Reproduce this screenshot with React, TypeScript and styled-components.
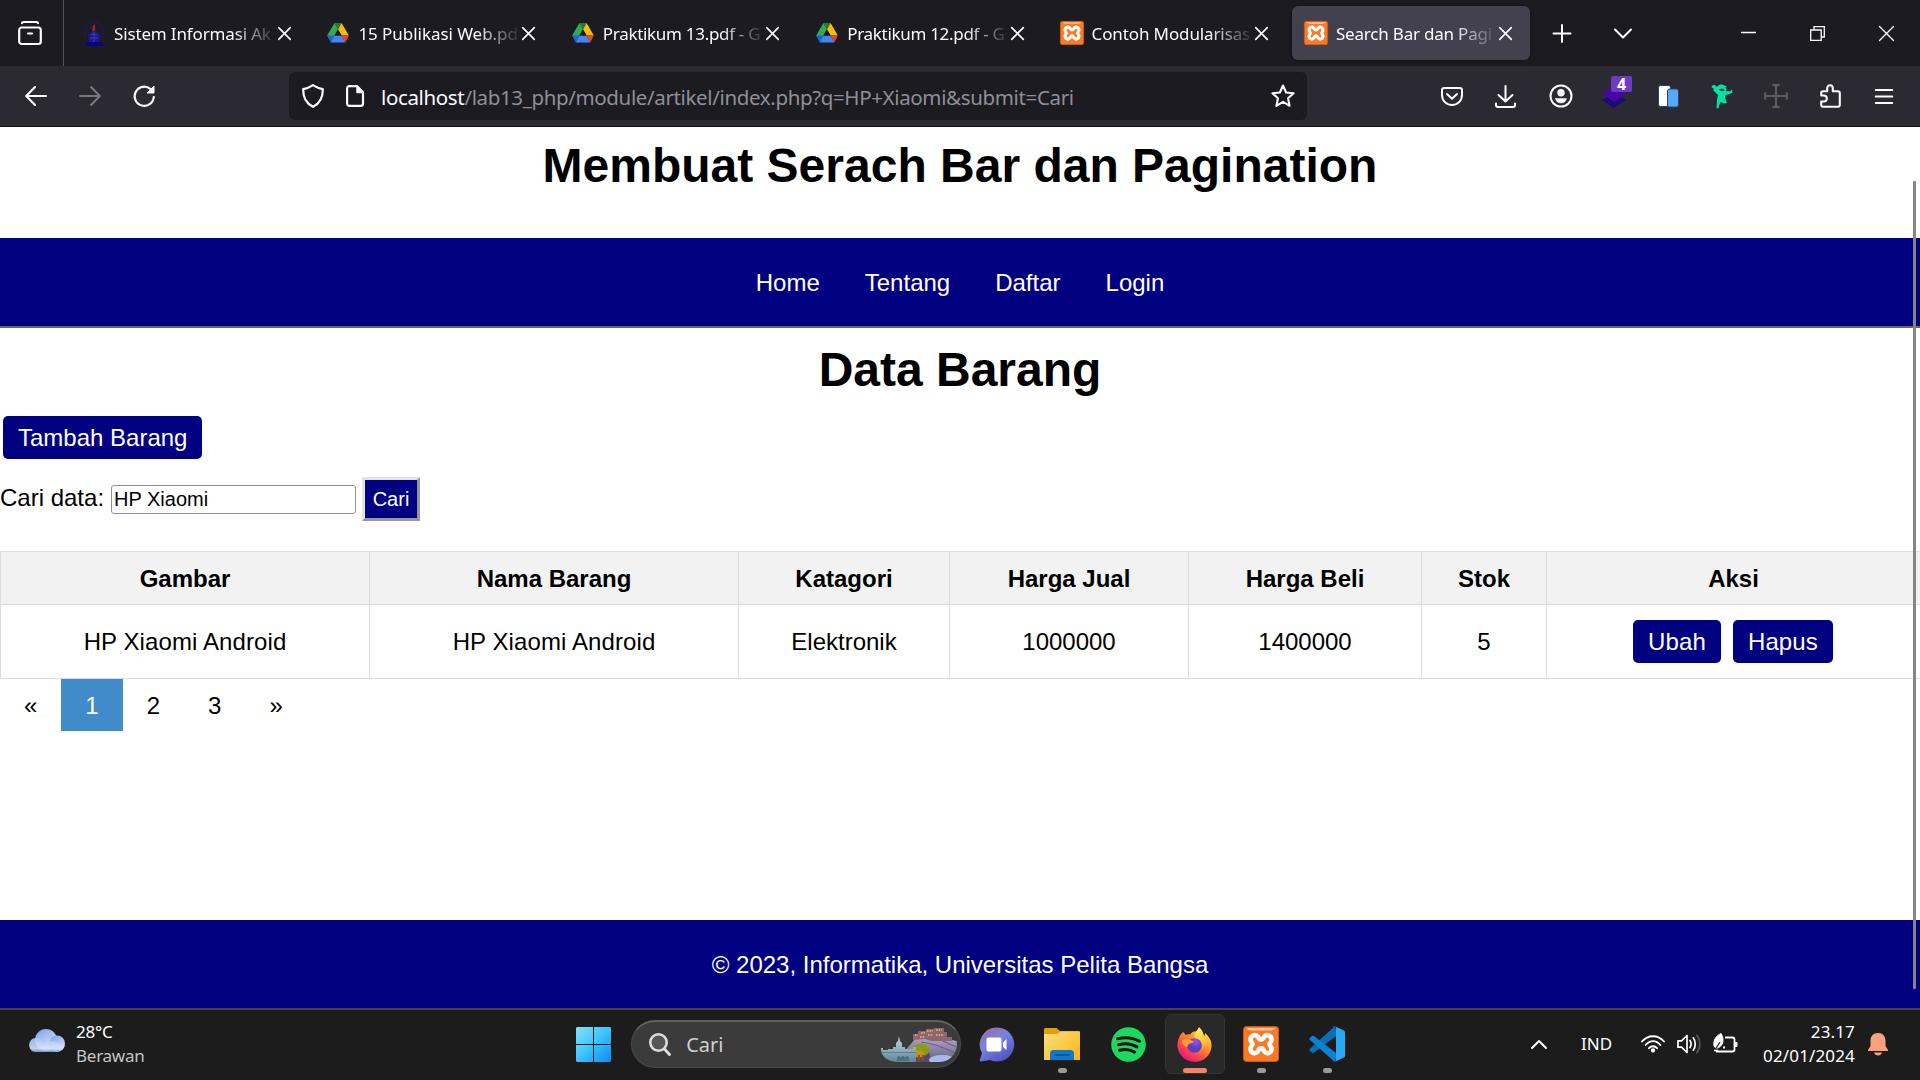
import React from "react";
import styled, { createGlobalStyle } from "styled-components";

const NAVY = "#000080";
const UI_FONT = `"Noto Sans", "Open Sans", sans-serif`;
const PAGE_FONT = `"Liberation Sans", Arial, sans-serif`;

const GlobalStyle = createGlobalStyle`
  *, *::before, *::after { box-sizing: border-box; }
  html, body { margin: 0; padding: 0; background: #fff; overflow: hidden; }
  svg { display: block; flex: none; overflow: visible; }
`;

const Screen = styled.div`
  width: 1920px;
  height: 1080px;
  display: flex;
  flex-direction: column;
  overflow: hidden;
`;

/* ---------- browser chrome ---------- */

const TabStrip = styled.div`
  height: 66px;
  flex: none;
  display: flex;
  align-items: center;
  background: #1c1b22;
  color: #fbfbfe;
  font-family: ${UI_FONT};
`;

const FirefoxView = styled.div`
  width: 64px;
  height: 66px;
  padding-left: 18px;
  display: flex;
  align-items: center;
  border-right: 1px solid #55545c;
  margin-right: 6px;
`;

const Tab = styled.div<{ $active?: boolean }>`
  width: 238px;
  height: 54px;
  margin-right: 6.4px;
  padding: 0 17.5px 0 12px;
  display: flex;
  align-items: center;
  border-radius: 6px;
  background: ${(p) => (p.$active ? "#42414d" : "transparent")};
  box-shadow: ${(p) => (p.$active ? "0 0 4px rgba(0,0,0,.4)" : "none")};
`;

const TabTitle = styled.span<{ $spacing: number }>`
  flex: 1;
  min-width: 0;
  margin-left: 8px;
  padding-top: 1px;
  overflow: hidden;
  white-space: nowrap;
  font-size: 17px;
  line-height: 26px;
  letter-spacing: ${(p) => p.$spacing}px;
  mask-image: linear-gradient(to left, transparent 0, #000 46px);
`;

const StripButton = styled.div<{ $w: number }>`
  width: ${(p) => p.$w}px;
  height: 66px;
  flex: none;
  display: flex;
  align-items: center;
  justify-content: center;
`;

const WindowControls = styled.div`
  display: flex;
  margin-left: auto;
`;

const Toolbar = styled.div`
  height: 61px;
  flex: none;
  display: flex;
  align-items: center;
  padding: 0 9px;
  background: #2b2a33;
  border-bottom: 1px solid #0c0c0d;
  color: #fbfbfe;
`;

const ToolCell = styled.div`
  position: relative;
  width: 54px;
  height: 54px;
  flex: none;
  display: flex;
  align-items: center;
  justify-content: center;
`;

const Badge = styled.span`
  position: absolute;
  left: 24px;
  top: 7px;
  width: 21px;
  height: 16px;
  border-radius: 2px;
  background: #6d3bbf;
  color: #fff;
  font: bold 16px/16px ${UI_FONT};
  text-align: center;
`;

const UrlBar = styled.div`
  width: 1018px;
  height: 48px;
  margin-left: 118px;
  margin-right: auto;
  padding: 0 12px 0 13px;
  display: flex;
  align-items: center;
  border-radius: 6px;
  background: #1c1b22;
  font-family: ${UI_FONT};
`;

const PageIconSlot = styled.span`
  margin: 0 17px 0 22px;
`;

const UrlText = styled.span`
  flex: 1;
  white-space: nowrap;
  color: #8f8f96;
  font-size: 20.5px;
  line-height: 30px;
  letter-spacing: -0.36px;
  padding-top: 1px;
  b { font-weight: 400; color: #fbfbfe; }
`;

/* ---------- page ---------- */

const Page = styled.div`
  position: relative;
  height: 881px;
  flex: none;
  display: flex;
  flex-direction: column;
  background: #fff;
  color: #000;
  font-family: ${PAGE_FONT};
  font-size: 24px;
  line-height: 28px;
`;

const Title = styled.h1`
  margin: 0;
  font-size: 48px;
  line-height: 55px;
  text-align: center;
`;

const Header = styled.header`
  height: 111px;
  padding-top: 11px;
`;

const Nav = styled.nav`
  height: 90px;
  padding-top: 1px;
  display: flex;
  justify-content: center;
  align-items: center;
  gap: 45px;
  background: ${NAVY};
  border-bottom: 2px solid #666;
  color: #fff;
`;

const Content = styled.main`
  flex: 1;
  padding-top: 14px;
`;

const NavyButton = styled.a`
  height: 43px;
  padding: 0 15px;
  display: inline-flex;
  align-items: center;
  border-radius: 5px;
  background: ${NAVY};
  color: #fff;
`;

const AddRow = styled.div`
  display: flex;
  margin: 19px 0 18px 3px;
`;

const SearchForm = styled.form`
  height: 44px;
  display: flex;
  align-items: center;
  margin-bottom: 30px;
`;

const SearchLabel = styled.label`
  width: 111px;
  padding-bottom: 2px;
  white-space: nowrap;
`;

const SearchInput = styled.input`
  width: 245px;
  height: 29px;
  margin: 0 6px 0 0;
  padding: 0 2px;
  border: 1px solid #8f8f9d;
  border-radius: 3px;
  background: #fff;
  color: #000;
  outline: none;
  font: 20px ${PAGE_FONT};
`;

const SearchButton = styled.button`
  width: 58px;
  height: 44px;
  padding: 0;
  border: 3px solid;
  border-color: #e3e3e3 #979797 #979797 #e3e3e3;
  background: ${NAVY};
  color: #fff;
  font: 20px ${PAGE_FONT};
`;

const Table = styled.table`
  width: 1920px;
  table-layout: fixed;
  border-collapse: collapse;
  text-align: center;
  th, td { border: 1px solid #ddd; padding: 0; }
  th { height: 53px; padding-top: 2px; background: #f2f2f2; }
  td { height: 74px; }
  td:nth-child(-n + 2) { letter-spacing: 0.1px; }
`;

const Actions = styled.div`
  display: flex;
  justify-content: center;
  gap: 12px;
  padding-right: 1px;
  letter-spacing: 0.12px;
`;

const Pagination = styled.div`
  display: flex;
`;

const PageLink = styled.a<{ $active?: boolean }>`
  padding: 13px 24px 11px;
  background: ${(p) => (p.$active ? "#428bca" : "transparent")};
  color: ${(p) => (p.$active ? "#fff" : "#000")};
`;

const Footer = styled.footer`
  height: 88px;
  padding-top: 2px;
  display: flex;
  justify-content: center;
  align-items: center;
  background: ${NAVY};
  color: #fff;
`;

const ScrollThumb = styled.div`
  position: absolute;
  top: 54px;
  left: 1913px;
  width: 3px;
  height: 808px;
  border-radius: 1px;
  background: #858585;
`;

/* ---------- taskbar ---------- */

const Taskbar = styled.div`
  height: 72px;
  flex: none;
  display: flex;
  align-items: center;
  padding-bottom: 2px;
  border-top: 2px solid #444;
  background: #1c1c1c;
  color: #fff;
  font-family: ${UI_FONT};
  font-size: 17px;
  line-height: 24px;
`;

const Weather = styled.div`
  width: 560px;
  padding-left: 29px;
  display: flex;
  align-items: center;
  gap: 11px;
  svg { margin-bottom: 7px; }
`;

const Lines = styled.div<{ $right?: boolean; $spacing: number }>`
  display: flex;
  flex-direction: column;
  text-align: ${(p) => (p.$right ? "right" : "left")};
  letter-spacing: ${(p) => p.$spacing}px;
  padding-bottom: 1px;
  small { font-size: 17px; color: #c4c4c4; }
`;

const SearchBox = styled.div`
  width: 330px;
  height: 48px;
  margin: 0 2px 0 5px;
  padding: 0 3px 0 17px;
  display: flex;
  align-items: center;
  gap: 15px;
  border: 1px solid #4a4a4a;
  border-top: 2px solid #606060;
  border-radius: 24px;
  background: #3b3b3b;
  color: #cfcfcf;
  font-size: 20px;
  span { flex: 1; }
`;

const AppSlot = styled.div<{ $active?: boolean }>`
  position: relative;
  width: 60px;
  height: 60px;
  margin: 0 3.1px;
  flex: none;
  display: flex;
  align-items: center;
  justify-content: center;
  border-radius: 6px;
  border: 1px solid ${(p) => (p.$active ? "#343434" : "transparent")};
  background: ${(p) => (p.$active ? "#292929" : "transparent")};
`;

const Running = styled.i<{ $active?: boolean }>`
  position: absolute;
  bottom: 0;
  width: ${(p) => (p.$active ? 24 : 9)}px;
  height: 5px;
  border-radius: 3px;
  background: ${(p) => (p.$active ? "#f4836a" : "#9a9a9a")};
`;

const Tray = styled.div`
  margin-left: auto;
  padding-right: 32px;
  display: flex;
  align-items: center;
`;

const Lang = styled.span`
  width: 31px;
  margin: 0 29px 0 34px;
`;

const VolumeSlot = styled.span`
  margin: 0 12px;
`;

const Clock = styled(Lines)`
  width: 117px;
  margin-right: 13px;
`;

/* ---------- icons ---------- */

type StrokeProps = { w: number; h?: number; sw?: number; color?: string; children: React.ReactNode };

const Stroke = ({ w, h = w, sw = 2, color = "currentColor", children }: StrokeProps) => (
  <svg width={w} height={h} viewBox={`0 0 ${w} ${h}`} fill="none" stroke={color} strokeWidth={sw} strokeLinecap="round" strokeLinejoin="round">
    {children}
  </svg>
);

const DriveIcon = () => (
  <svg width="24" height="24" viewBox="0 0 24 24">
    <path d="M8.4 2h7.2L12 8.4z" fill="#188038" />
    <path d="M8.4 2 12 8.4 4.8 20.6 1.2 14.6z" fill="#34a853" />
    <path d="M15.6 2 22.8 14.6h-7.2L12 8.4z" fill="#fbbc04" />
    <path d="M1.2 14.6h7.2l-3.6 6.8z" fill="#1967d2" />
    <path d="M8.4 14.6h7.2l3.6 6.8H4.8z" fill="#4285f4" />
    <path d="M15.6 14.6h7.2l-3.6 6.8z" fill="#ea4335" />
    <path d="M12 8.4 15.6 14.6H8.4z" fill="#1c1b22" />
  </svg>
);

const XamppIcon = ({ size = 24 }: { size?: number }) => (
  <svg width={size} height={size} viewBox="0 0 36 36">
    <rect x="0.5" y="0.5" width="35" height="35" rx="3" fill="#fb7a24" stroke="#c65a16" />
    <path d="M4 2h28c0 2-3 2.400-6 2.400H10C7 4.400 4 4 4 2z" fill="#fdbf95" />
    <path
      d="M14.500 10.200c-2.500-2.300-7-.4-7 3.200 0 2.600 2 3.200 2 4.600s-2 2.200-2 5c0 3.800 4.600 5.400 7 2.800 1.300-1.400.5-3.500 3.500-3.500s2.200 2.100 3.500 3.500c2.400 2.600 7 1 7-2.800 0-2.800-2-3.600-2-5s2-2 2-4.600c0-3.600-4.500-5.500-7-3.200-1.500 1.400-.5 3.300-3.500 3.300s-2-1.900-3.500-3.300z"
      fill="none" stroke="#fff" strokeWidth="4.6" strokeLinejoin="round"
    />
    <path d="M14 15.500v5M22 15.500v5" stroke="#fb7a24" strokeWidth="2" strokeLinecap="round" />
  </svg>
);

const CampusIcon = () => (
  <svg width="24" height="26" viewBox="0 0 24 26">
    <path d="M3 17C2 8 6 2 12 1.500S22 8 21 17" fill="none" stroke="#1d1c52" strokeWidth="2" strokeDasharray="2 1" />
    <path d="M6 14.500 12 9l6 5.500-1 7.500H7z" fill="#1b1a8e" />
    <path d="M4 22h16l1 4H3z" fill="#06067e" />
    <path d="M9 14.500h6M8 18h8M12 12v10" stroke="#3b39b0" strokeWidth="1.2" />
    <path d="M10.500 11c-1-3 .5-6 2.500-7 0 3 .8 4-.4 7z" fill="#b5171d" />
  </svg>
);

const CloseIcon = () => (
  <Stroke w={13} sw={1.7}><path d="M.7.7 12.300 12.300M12.300.7.7 12.300" /></Stroke>
);

const Cloud = () => (
  <svg width="36" height="23" viewBox="0 0 36 23">
    <defs>
      <linearGradient id="cloudBack" x1="0" y1="0" x2="0.6" y2="1"><stop stopColor="#7ca0e6" /><stop offset="1" stopColor="#d6e4fb" /></linearGradient>
      <linearGradient id="cloudFront" x1="0" y1="0" x2="0" y2="1"><stop stopColor="#a9c3f4" /><stop offset="0.75" stopColor="#d5e3fb" /><stop offset="1" stopColor="#7fa3ec" /></linearGradient>
    </defs>
    <circle cx="17" cy="11" r="11" fill="url(#cloudBack)" />
    <circle cx="28" cy="14.500" r="8" fill="url(#cloudBack)" />
    <path d="M7 9c4 0 6 2 8 4 2-1.500 4-1 6-1 5 0 7 3 14.500 4-.5 4-3.500 7-7.500 7H7c-9 0-9-14 0-14z" fill="url(#cloudFront)" opacity="0.9" />
  </svg>
);

const WindowsLogo = () => (
  <svg width="35" height="35" viewBox="0 0 35 35">
    <defs><linearGradient id="win" x1="0" y1="0" x2="1" y2="1"><stop stopColor="#87e0fb" /><stop offset="0.5" stopColor="#3cc3fa" /><stop offset="1" stopColor="#0a8cf5" /></linearGradient></defs>
    <path d="M1 0h16v17H0V1zM18 0h16l1 1v16H18zM0 18h17v17H1l-1-1zM18 18h17v16l-1 1H18z" fill="url(#win)" />
  </svg>
);

const Potala = () => (
  <svg width="76" height="36" viewBox="0 0 76 36">
    <defs>
      <clipPath id="pill"><path d="M0 0h60c9 2 16 9 16 17.500S69 35 58 35H18C8 35 1 31 0 23z" /></clipPath>
      <linearGradient id="hill" x1="0" y1="0" x2="0" y2="1"><stop stopColor="#aa9fc0" /><stop offset="1" stopColor="#5d5680" /></linearGradient>
      <linearGradient id="hall" x1="0" y1="0" x2="0" y2="1"><stop stopColor="#c2dae0" /><stop offset="1" stopColor="#5e8193" /></linearGradient>
    </defs>
    <g clipPath="url(#pill)">
      <path d="M24 24 34 12h32l10 2v24H24z" fill="url(#hill)" />
      <path d="M40 15c12 1 24 6 36 12M58 12c6 3 12 6 18 8" stroke="#6b6189" strokeWidth="1.2" fill="none" />
      <path d="M32 13V7h5V4h8V2h8V1h10v4h3v5h5v4H50l-6-2z" fill="#8c6670" />
      <path d="M34 8h3M40 6h4M46 4h6M55 3h6M47 8h5M55 8h8M39 10h4" stroke="#e79a68" strokeWidth="2" strokeDasharray="1.6 1" />
      <path d="M35 36V22h12l4 14z" fill="#53496c" />
      <ellipse cx="39.500" cy="23" rx="9" ry="6.500" fill="#8c9a16" />
      <ellipse cx="38" cy="27" rx="5" ry="3.500" fill="#c4921f" />
      <path d="M38 28v7M42 28v6" stroke="#8a5418" strokeWidth="2" />
      <ellipse cx="61" cy="33" rx="13" ry="5" fill="#a9b9ea" />
      <path d="M0 21h2v2h5v-1h5v-2h3v-4l2-2 1-5 1 5 2 2v4h3v2h8v-2h3v16H0z" fill="url(#hall)" />
      <path d="M0 25.500h35" stroke="#5b8093" strokeWidth="1" />
      <path d="M17 34v-4h2v4M21 34v-4h2v4M25 34v-4h2v4" stroke="#39586a" fill="none" />
    </g>
  </svg>
);

const ChatIcon = () => (
  <svg width="35" height="35" viewBox="0 0 35 35">
    <defs><linearGradient id="chat" x1="0.1" y1="0" x2="0.7" y2="1"><stop stopColor="#9a6aa8" /><stop offset="0.45" stopColor="#7b83dc" /><stop offset="1" stopColor="#4f52c4" /></linearGradient></defs>
    <path d="M18 .5a17 17 0 1 1-7 32.400L2 34.500c-1 0-1.400-.6-1.200-1.500L3 26A17 17 0 0 1 18 .5z" fill="url(#chat)" />
    <rect x="7.500" y="10.500" width="15" height="14" rx="2" fill="#fff" />
    <path d="m24 15.500 3.500-3.400v11L24 20z" fill="#fff" />
  </svg>
);

const FolderIcon = () => (
  <svg width="36" height="33" viewBox="0 0 36 33">
    <defs><linearGradient id="fold" x1="0" y1="0" x2="1" y2="1"><stop stopColor="#ffe083" /><stop offset="1" stopColor="#f8b60f" /></linearGradient></defs>
    <path d="M0 1.500C0 .6.600 0 1.500 0h11l3.500 3h18.500c.9 0 1.500.6 1.500 1.500V10H0z" fill="#e2a00b" />
    <path d="M0 6h13l4-2.500h19V32H0z" fill="url(#fold)" />
    <path d="M6 32v-6.500C6 23 7.500 22 9.500 22h17c2 0 3.500 1 3.500 3.500V32z" fill="#0f78cc" />
    <path d="M11 27h14" stroke="#0a4f94" strokeWidth="1.6" strokeLinecap="round" />
  </svg>
);

const SpotifyIcon = () => (
  <svg width="35" height="35" viewBox="0 0 35 35">
    <circle cx="17.500" cy="17.500" r="17.300" fill="#1ed760" />
    <path d="M6.500 11.800c7.500-2 15.500-1.200 22 2.500M7.500 17.700c6.500-1.700 13-1 18.500 2.200M8.500 23.200c5.500-1.300 10.500-.8 15 1.900" fill="none" stroke="#101010" strokeWidth="3" strokeLinecap="round" />
  </svg>
);

const FirefoxIcon = () => (
  <svg width="35" height="35" viewBox="0 0 35 35">
    <defs>
      <linearGradient id="fxBody" x1="0.85" y1="0.1" x2="0.25" y2="0.95"><stop stopColor="#ffe54a" /><stop offset="0.35" stopColor="#ff9a2b" /><stop offset="0.7" stopColor="#ff4a4c" /><stop offset="1" stopColor="#e5177b" /></linearGradient>
      <linearGradient id="fxFlame" x1="0.4" y1="0" x2="0.5" y2="1"><stop stopColor="#fff35a" /><stop offset="0.6" stopColor="#ffc233" /><stop offset="1" stopColor="#ff7a3a" stopOpacity="0" /></linearGradient>
      <radialGradient id="fxGlobe" cx="0.6" cy="0.2"><stop stopColor="#a04ff5" /><stop offset="1" stopColor="#5a3fc0" /></radialGradient>
    </defs>
    <path d="M5.500 5.500C6.500 4.500 8 7 8.500 8c1.500-.7 3-.8 4.500-.6 1.500-2 3-3 4-3C20 5 21 2 22 .2c3.500 3 4 6 5 8.800 1-.5 1-2 1-3 7 6 8 13 5 19.500-3 6-9 9.300-15.500 9.300C8 34.800.4 27 .4 18.500.4 13.500 2.500 8.500 5.500 5.500z" fill="url(#fxBody)" />
    <path d="M22 .2c3.500 3 4 6 5 8.800 4 5 5 13-1 18-3 1-5-2-3-5 3-6-5-9-6-13 0-3 4-5 5-8.800z" fill="url(#fxFlame)" />
    <circle cx="17.500" cy="18.500" r="7.300" fill="url(#fxGlobe)" />
    <path d="M5.500 13c3-2 8-1 11 1.500.6 1-1.500 1.500-3.500 2s-2 2-3 3.500C6 19 4.500 16 5.500 13z" fill="#ff9e2e" />
  </svg>
);

const VsCodeIcon = () => (
  <svg width="36" height="36" viewBox="0 0 36 36">
    <path d="M25.500.6 1 22.800c-.8.700-.8 1.500 0 2.200l2 1.800c.6.500 1.300.5 2 0L29 8.500z" fill="#0a6fb8" />
    <path d="M1 11.800 3 10c.6-.5 1.300-.5 2 0l24 18.500-3.500 7.200L1 14c-.8-.7-.8-1.500 0-2.200z" fill="#0b83d0" />
    <path d="M25.500.3 35 4.500c.6.300 1 .9 1 1.600v23.800c0 .7-.4 1.300-1 1.600l-9.500 4.200c-.8.300-1.600.1-2.200-.5 1.400 1 3.700.3 3.700-1.900V2.700c0-2.200-2.300-2.900-3.700-1.900.6-.6 1.400-.8 2.200-.5z" fill="#2aa8f4" />
  </svg>
);

const TrayBattery = () => (
  <svg width="25" height="21" viewBox="0 0 25 21" fill="none" stroke="#fff">
    <path d="M12 3.500h7.500c1.200 0 2 .8 2 2v10c0 1.200-.8 2-2 2H3M10 13.500h2" strokeWidth="1.8" />
    <path d="M22 8.500h2v4h-2z" fill="#fff" strokeWidth="1" />
    <path d="M8-.5C3 2 0 6 1 12l2 2.500C10 13 12 6 8-.5z" fill="#fff" strokeWidth="1" />
    <path d="M2 16 7 8" stroke="#1c1c1c" strokeWidth="1.2" />
    <path d="M1 16.500h4" strokeWidth="1.6" />
  </svg>
);

/* ---------- data ---------- */

const tabs = [
  { title: "Sistem Informasi Ak", icon: <CampusIcon />, spacing: -0.15 },
  { title: "15 Publikasi Web.pd", icon: <DriveIcon />, spacing: -0.05 },
  { title: "Praktikum 13.pdf - G", icon: <DriveIcon />, spacing: -0.3 },
  { title: "Praktikum 12.pdf - G", icon: <DriveIcon />, spacing: -0.3 },
  { title: "Contoh Modularisas", icon: <XamppIcon />, spacing: -0.12 },
  { title: "Search Bar dan Pagi", icon: <XamppIcon />, spacing: -0.2, active: true },
];

const columns = [
  { label: "Gambar", width: 369 },
  { label: "Nama Barang", width: 369 },
  { label: "Katagori", width: 211 },
  { label: "Harga Jual", width: 239 },
  { label: "Harga Beli", width: 233 },
  { label: "Stok", width: 125 },
  { label: "Aksi", width: 374 },
];

const items = [["HP Xiaomi Android", "HP Xiaomi Android", "Elektronik", "1000000", "1400000", "5"]];

const apps = [
  { name: "chat", icon: <ChatIcon /> },
  { name: "explorer", icon: <FolderIcon />, running: true },
  { name: "spotify", icon: <SpotifyIcon /> },
  { name: "firefox", icon: <FirefoxIcon />, running: true, active: true },
  { name: "xampp", icon: <XamppIcon size={36} />, running: true },
  { name: "vscode", icon: <VsCodeIcon />, running: true },
];

/* ---------- sections ---------- */

const BrowserTabs = () => (
  <TabStrip>
    <FirefoxView>
      <Stroke w={24} h={24} sw={2.2}>
        <path d="M4 2.200C4 1.400 5 1 6 1h12c1 0 2 .4 2 1.200" />
        <rect x="1.200" y="6.500" width="21.600" height="16.500" rx="2.500" />
        <path d="M10 12.500h4" />
      </Stroke>
    </FirefoxView>
    {tabs.map((t) => (
      <Tab key={t.title} $active={t.active}>
        {t.icon}
        <TabTitle $spacing={t.spacing}>{t.title}</TabTitle>
        <CloseIcon />
      </Tab>
    ))}
    <StripButton $w={52}><Stroke w={18} sw={2}><path d="M9 1v17M.5 9.500h17" /></Stroke></StripButton>
    <StripButton $w={69}><Stroke w={18} h={11} sw={2}><path d="m1 1.500 8 8 8-8" /></Stroke></StripButton>
    <WindowControls>
      <StripButton $w={69}><Stroke w={15} h={2} sw={1.3}><path d="M.5.500h14" /></Stroke></StripButton>
      <StripButton $w={69}><Stroke w={15} sw={1.3}><path d="M.7 4h10.500v10.300H.7zM4 4V.7h10.300V11h-3" strokeLinejoin="miter" /></Stroke></StripButton>
      <StripButton $w={68}><Stroke w={15} sw={1.4}><path d="m.5.500 14 14M14.500.500l-14 14" /></Stroke></StripButton>
    </WindowControls>
  </TabStrip>
);

const BrowserToolbar = () => (
  <Toolbar>
    <ToolCell><Stroke w={22} h={20} sw={2.1}><path d="M10 1 1.200 10 10 19M1.500 10H21" /></Stroke></ToolCell>
    <ToolCell><Stroke w={22} h={20} sw={2.1} color="#77767d"><path d="m12 1 8.800 9L12 19M20.500 10H1" /></Stroke></ToolCell>
    <ToolCell>
      <Stroke w={22} h={22} sw={2.2}>
        <path d="M17.500 4A9.600 9.600 0 1 0 20.800 12" />
        <path d="M21 1.500V8h-6.500z" fill="currentColor" strokeWidth="1" />
      </Stroke>
    </ToolCell>
    <UrlBar>
      <Stroke w={22} h={24} sw={2.2}><path d="M11 1.200c3 2 6 3.300 9.800 4C21 13 18.500 19 11 22.800 3.500 19 1 13 1.200 5.200 5 4.500 8 3.200 11 1.200z" /></Stroke>
      <PageIconSlot>
        <Stroke w={18} h={22} sw={2.2}>
          <path d="M3.500 1.100h7.500l6 6.200v11.200c0 1.500-1 2.400-2.400 2.400H3.500c-1.400 0-2.400-1-2.400-2.400v-15c0-1.400 1-2.400 2.400-2.400z" />
          <path d="M11 1.500v6h5.500z" fill="currentColor" strokeWidth="1.5" />
        </Stroke>
      </PageIconSlot>
      <UrlText><b>localhost</b>/lab13_php/module/artikel/index.php?q=HP+Xiaomi&amp;submit=Cari</UrlText>
      <Stroke w={24} sw={2.1}><path d="m12 1.500 3.100 7 7.500.8-5.600 5 1.600 7.500-6.600-3.900-6.600 3.900L7 14.300l-5.600-5 7.500-.8z" /></Stroke>
    </UrlBar>
    <ToolCell><Stroke w={22} h={19} sw={2}><path d="M3.300 1h15.400C20 1 21 2 21 3.300V8c0 5.700-4.500 10-10 10S1 13.700 1 8V3.300C1 2 2 1 3.300 1zM6 7l5 4.800L16 7" /></Stroke></ToolCell>
    <ToolCell><Stroke w={22} h={23} sw={2}><path d="M10.500 1v15M3.500 10l7 6.500 7-6.500M1 18.500V20c0 1.200.8 2 2 2h15c1.200 0 2-.8 2-2v-1.500" /></Stroke></ToolCell>
    <ToolCell>
      <Stroke w={23} h={24} sw={2}>
        <circle cx="12" cy="12" r="10.500" />
        <circle cx="12" cy="8.800" r="3.700" fill="currentColor" stroke="none" />
        <path d="M6.500 14.500h11c-.5 3-2.500 4.500-5.500 4.500s-5-1.500-5.500-4.500z" fill="currentColor" strokeWidth="0.5" />
      </Stroke>
    </ToolCell>
    <ToolCell>
      <svg width="24" height="24" viewBox="0 0 24 24">
        <path d="m12 9 12 7-12 8L0 16z" fill="#20077a" />
        <path d="m12 2 12 7-12 9L0 9z" fill="#4706a6" />
      </svg>
      <Badge>4</Badge>
    </ToolCell>
    <ToolCell>
      <svg width="21" height="24" viewBox="0 0 21 24">
        <rect x="0.500" y="1.500" width="12" height="21" rx="2" fill="#fff" stroke="#2b4168" />
        <rect x="9.500" y="5" width="11" height="18" rx="2" fill="#58a8fb" stroke="#2b4168" />
      </svg>
    </ToolCell>
    <ToolCell>
      <svg width="22" height="25" viewBox="0 0 22 25">
        <path d="M1 1.500 4 1l2 2c1-2 4-3 6-2l4 1.500-1.500 1C16 5 15.500 6 15 7.500l4.500-.5L21 5.500l.500 3-2 1c-2 1-3.500 1-5 1.500l-.5 3 2 5-3 .5-3-1.500c-1 1-2 3-2.500 6.500L5.500 24 6 16l1-5-5-5 1-1-2.500-2z" fill="#00e5a0" />
        <path d="M8 5.500c2-1 4-.8 6 .5-1.500 1.500-4.500 1.500-6-.5z" fill="#2b2a33" />
      </svg>
    </ToolCell>
    <ToolCell><Stroke w={24} sw={2.2} color="#5d5c62"><path d="M12 1v22M1 12h22M8.500 1.200h7M8.500 22.800h7M1.200 8.500v7M22.800 8.500v7M9.500 12h5M12 9.500v5" strokeLinecap="butt" /></Stroke></ToolCell>
    <ToolCell>
      <Stroke w={21} h={24} sw={2.1}>
        <path d="M1.200 11.500V9.200C1.200 8 2 7.200 3.200 7.200h4V4.300C7.200 2.500 8.300 1.200 10 1.200s2.800 1.300 2.800 3.100v2.900h5c1.200 0 2 .8 2 2v11.600c0 1.200-.8 2-2 2H3.200c-1.200 0-2-.8-2-2v-3.300h2.600c1.700 0 3-1.200 3-3s-1.300-3-3-3z" />
      </Stroke>
    </ToolCell>
    <ToolCell><Stroke w={18} h={17} sw={2}><path d="M.8 2h16.400M.8 8.500h16.400M.8 15h16.400" /></Stroke></ToolCell>
  </Toolbar>
);

const WebPage = () => (
  <Page>
    <Header><Title>Membuat Serach Bar dan Pagination</Title></Header>
    <Nav>
      {["Home", "Tentang", "Daftar", "Login"].map((n) => <span key={n}>{n}</span>)}
    </Nav>
    <Content>
      <Title>Data Barang</Title>
      <AddRow><NavyButton>Tambah Barang</NavyButton></AddRow>
      <SearchForm>
        <SearchLabel>Cari data:</SearchLabel>
        <SearchInput defaultValue="HP Xiaomi" />
        <SearchButton type="button">Cari</SearchButton>
      </SearchForm>
      <Table>
        <colgroup>{columns.map((c) => <col key={c.label} width={c.width} />)}</colgroup>
        <thead><tr>{columns.map((c) => <th key={c.label}>{c.label}</th>)}</tr></thead>
        <tbody>
          {items.map((row, r) => (
            <tr key={r}>
              {row.map((cell, i) => <td key={i}>{cell}</td>)}
              <td><Actions><NavyButton>Ubah</NavyButton><NavyButton>Hapus</NavyButton></Actions></td>
            </tr>
          ))}
        </tbody>
      </Table>
      <Pagination>
        {["«", "1", "2", "3", "»"].map((p) => <PageLink key={p} $active={p === "1"}>{p}</PageLink>)}
      </Pagination>
    </Content>
    <Footer>© 2023, Informatika, Universitas Pelita Bangsa</Footer>
    <ScrollThumb />
  </Page>
);

const WindowsTaskbar = () => (
  <Taskbar>
    <Weather>
      <Cloud />
      <Lines $spacing={-0.25}><span>28°C</span><small>Berawan</small></Lines>
    </Weather>
    <AppSlot><WindowsLogo /></AppSlot>
    <SearchBox>
      <Stroke w={22} h={23} sw={2.6} color="#dcdcdc"><circle cx="9.500" cy="9.500" r="8.200" fill="#555" /><path d="m15.500 16 5 5.500" strokeWidth="3" /></Stroke>
      <span>Cari</span>
      <Potala />
    </SearchBox>
    {apps.map((a) => (
      <AppSlot key={a.name} $active={a.active}>
        {a.icon}
        {a.running && <Running $active={a.active} />}
      </AppSlot>
    ))}
    <Tray>
      <Stroke w={16} h={9} sw={2}><path d="m1 8 7-7 7 7" /></Stroke>
      <Lang>IND</Lang>
      <Stroke w={24} h={18} sw={1.9}>
        <path d="M1 6.500C7-.6 17-.6 23 6.500M4.600 10C9 4.800 15 4.800 19.400 10M8 13.200c2.200-2.600 5.800-2.600 8 0" />
        <circle cx="12" cy="15.500" r="1.200" fill="currentColor" />
      </Stroke>
      <VolumeSlot>
        <Stroke w={24} h={20} sw={1.7}>
          <path d="M1 6.800h3.500L10 1.500v17L4.500 13.200H1z" />
          <path d="M13 6.500c1.300 2 1.300 5 0 7M16.300 3.800c2.600 3.500 2.600 8.900 0 12.400" />
          <path d="M19.800 1.200c4 5 4 12.600 0 17.600" stroke="#555" />
        </Stroke>
      </VolumeSlot>
      <TrayBattery />
      <Clock $right $spacing={0.15}><span>23.17</span><span>02/01/2024</span></Clock>
      <svg width="20" height="23" viewBox="0 0 20 23">
        <path d="M10 0C5 0 2.500 3.500 2.500 8v5L0 17v1h20v-1l-2.500-4V8C17.500 3.500 15 0 10 0zM6 19.500h8c-.6 2-2 3-4 3s-3.400-1-4-3z" fill="#fba07e" />
      </svg>
    </Tray>
  </Taskbar>
);

export default function App() {
  return (
    <Screen>
      <GlobalStyle />
      <BrowserTabs />
      <BrowserToolbar />
      <WebPage />
      <WindowsTaskbar />
    </Screen>
  );
}
